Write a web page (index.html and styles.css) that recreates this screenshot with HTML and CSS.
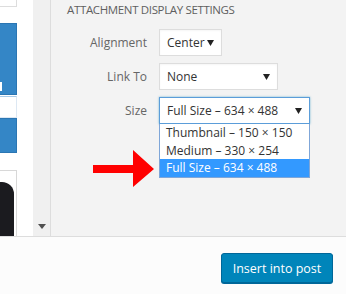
FILE: index.html
```html
<!DOCTYPE html>
<html>
<head>
<meta charset="utf-8">
<link rel="stylesheet" href="styles.css">
</head>
<body>
<div class="app">
  <div class="main">
    <div class="library">
      <div class="thumb thumb-top"></div>
      <div class="thumb thumb-blue"><span class="blue-mark"></span></div>
      <div class="thumb thumb-white"></div>
      <div class="thumb thumb-blue2"></div>
      <div class="thumb thumb-dark"><div class="dark-shape"><div class="dark-inner"></div></div></div>
    </div>
    <div class="scrolltrack">
      <svg class="scroll-arrow" width="8" height="5" viewBox="0 0 8 5"><polygon points="0,0 8,0 4,5" fill="#505050"/></svg>
    </div>
    <div class="sidebar">
      <h2 class="heading">Attachment Display Settings</h2>
      <div class="row">
        <span class="label">Alignment</span>
        <div class="select select-align"><span>Center</span><svg class="caret" width="7" height="7" viewBox="0 0 7 7"><polygon points="0,0 7,0 3.5,6" fill="#222"/></svg></div>
      </div>
      <div class="row">
        <span class="label">Link To</span>
        <div class="select select-link"><span>None</span><svg class="caret" width="7" height="7" viewBox="0 0 7 7"><polygon points="0,0 7,0 3.5,6" fill="#222"/></svg></div>
      </div>
      <div class="row">
        <span class="label">Size</span>
        <div class="select-wrap">
          <div class="select select-size"><span>Full Size – 634 × 488</span><svg class="caret" width="7" height="7" viewBox="0 0 7 7"><polygon points="0,0 7,0 3.5,6" fill="#222"/></svg></div>
          <ul class="dropdown">
            <li>Thumbnail – 150 × 150</li>
            <li>Medium – 330 × 254</li>
            <li class="active">Full Size – 634 × 488</li>
          </ul>
        </div>
      </div>
      <svg class="red-arrow" width="62" height="40" viewBox="0 0 62 40"><polygon points="0,15 40,15 40,0 61,19 40,37 40,23 0,23" fill="#ff0000"/></svg>
    </div>
  </div>
  <div class="toolbar">
    <button class="btn">Insert into post</button>
  </div>
</div>
</body>
</html>
```
FILE: styles.css
```css
html, body {
  margin: 0;
  padding: 0;
}
body {
  font-family: "Open Sans", "Noto Sans", sans-serif;
  font-size: 12px;
  color: #333;
  width: 346px;
  height: 294px;
  overflow: hidden;
}
.app {
  display: grid;
  grid-template-rows: 236px 58px;
  height: 294px;
}
.main {
  display: flex;
  background: #f3f3f3;
}
.library {
  width: 33px;
  flex: none;
  background: #fff;
  position: relative;
  overflow: hidden;
}
.thumb {
  position: absolute;
  left: -10px;
  width: 27px;
  box-sizing: border-box;
}
.thumb-top {
  top: -20px;
  height: 27px;
  border: 1px solid #ddd;
  background: #fff;
}
.thumb-blue {
  top: 23px;
  height: 72px;
  background: #3486c6;
  border: 1px solid #2b76b3;
}
.blue-mark {
  position: absolute;
  left: 8px;
  top: 58px;
  width: 3px;
  height: 9px;
  background: #fff;
}
.thumb-white {
  top: 96px;
  height: 22px;
  background: #fff;
  border: 1px solid #dde8f3;
  border-top: 1px solid #a9cbe8;
}
.thumb-blue2 {
  top: 118px;
  height: 35px;
  background: #3486c6;
  border: 1px solid #2b76b3;
}
.thumb-dark {
  top: 170px;
  height: 80px;
  border: 1px solid #d8d8d8;
  background: #fff;
  overflow: hidden;
}
.dark-shape {
  position: absolute;
  left: -10px;
  top: 11px;
  width: 33px;
  height: 90px;
  background: #1b1b1f;
  border-radius: 0 12px 0 0;
}
.dark-inner {
  position: absolute;
  left: 0;
  top: 28px;
  width: 13px;
  height: 60px;
  background: #fff;
  border: 1px solid #777;
}
.scrolltrack {
  width: 17px;
  flex: none;
  background: #f0f0f0;
  border-right: 1px solid #ddd;
  display: flex;
  align-items: flex-end;
  justify-content: center;
}
.scroll-arrow {
  display: block;
  margin-bottom: 7px;
  margin-left: 1px;
}
.sidebar {
  flex: 1;
  padding: 0 16px;
  position: relative;
}
.heading {
  margin: 0;
  padding-top: 1px;
  font-size: 11.5px;
  letter-spacing: -0.35px;
  font-weight: 400;
  text-transform: uppercase;
  color: #5f5f5f;
  line-height: 17px;
}
.row {
  display: flex;
  align-items: flex-start;
  margin-top: 11px;
}
.row + .row {
  margin-top: 7px;
}
.label {
  width: 80px;
  text-align: right;
  color: #666;
  line-height: 27px;
  margin-right: 12px;
}
.select {
  box-sizing: border-box;
  height: 27px;
  background: #fff;
  border: 1px solid #ddd;
  display: flex;
  align-items: center;
  justify-content: space-between;
  padding: 0 7px 0 7px;
  color: #333;
  box-shadow: inset 0 1px 2px rgba(0,0,0,0.04);
}
.caret {
  display: block;
  margin-top: 1px;
}
.select-align {
  width: 63px;
}
.select-link {
  width: 119px;
}
.select-wrap {
  width: 151px;
}
.select-size {
  width: 151px;
  border-color: #5b9dd9;
  box-shadow: 0 0 2px rgba(30,140,190,0.6);
}
.dropdown {
  list-style: none;
  margin: 0;
  padding: 0;
  background: #fff;
  border: 1px solid #7fa6d8;
  border-top: none;
}
.dropdown li {
  height: 17.5px;
  line-height: 17.5px;
  padding-left: 6px;
  color: #333;
}
.dropdown li.active {
  background: #3399ff;
  color: #fff;
}
.red-arrow {
  position: absolute;
  left: 42px;
  top: 150px;
  width: 62px;
  height: 40px;
  display: block;
}
.toolbar {
  background: #fcfcfc;
  border-top: 1px solid #ddd;
  display: flex;
  justify-content: flex-end;
  align-items: flex-start;
  padding: 16px 13px 0 0;
}
.btn {
  height: 30px;
  width: 112px;
  background: #0085ba;
  border: 1px solid #006799;
  border-radius: 3px;
  box-shadow: 0 1px 0 #006799;
  color: #fff;
  font-family: "Open Sans", "Noto Sans", sans-serif;
  font-size: 12.5px;
  white-space: nowrap;
  padding: 0;
  cursor: pointer;
}
```
